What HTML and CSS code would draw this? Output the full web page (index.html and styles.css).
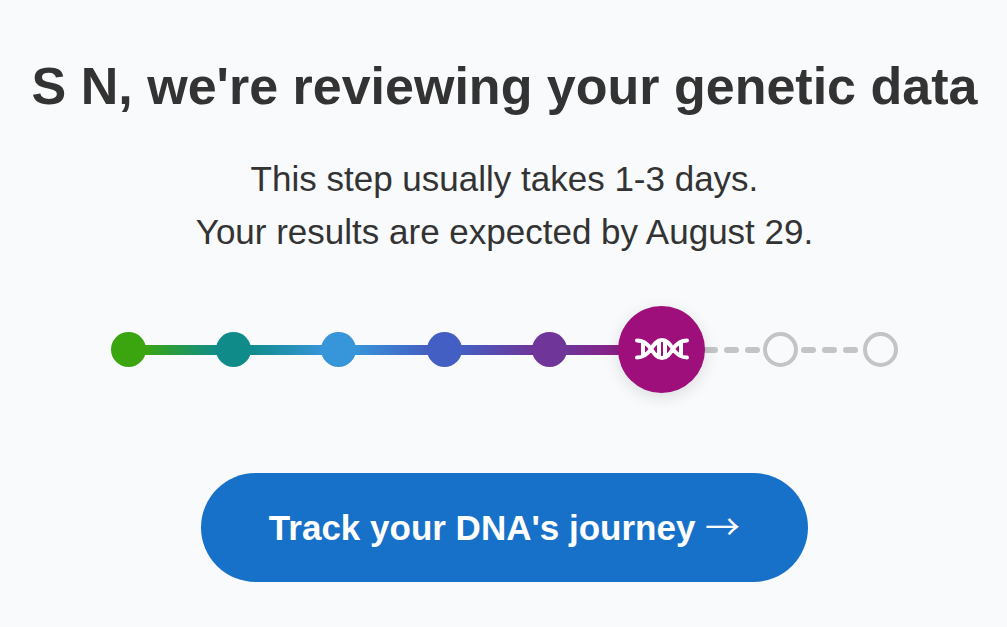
FILE: index.html
```
<!DOCTYPE html>
<html lang="en">
<head>
    <meta charset="utf-8">
    <title>Your DNA's journey</title>
    <link rel="stylesheet" href="styles.css">
</head>
<body>
    <main class="status">
        <h1>S N, we're reviewing your genetic data</h1>
        <p>This step usually takes 1-3 days.<br>Your results are expected by August 29.</p>

        <div class="tracker">
            <span class="step green"></span>
            <span class="line green-teal"></span>
            <span class="step teal"></span>
            <span class="line teal-blue"></span>
            <span class="step blue"></span>
            <span class="line blue-indigo"></span>
            <span class="step indigo"></span>
            <span class="line indigo-purple"></span>
            <span class="step purple"></span>
            <span class="line short purple-magenta"></span>
            <span class="step current">
                <svg width="56" height="26" viewBox="0 0 56 26" fill="none" stroke="#fff" stroke-linecap="round">
                    <path stroke-width="4" d="M3 3.500C10 3.500 14 7.500 17 12S23 21 28 21S36 16.500 39 12S46 3.500 53 3.500M3 20.500C10 20.500 14 16.500 17 12S23 3 28 3S36 7.500 39 12S46 20.500 53 20.500"/>
                    <path stroke-width="4" d="M9 6V18M25 5V19M31 5V19M47 6V18"/>
                </svg>
            </span>
            <svg class="dashes first" height="6"><line x1="1" y1="3" x2="54" y2="3"/></svg>
            <span class="step todo"></span>
            <svg class="dashes" height="6"><line x1="6" y1="3" x2="58" y2="3"/></svg>
            <span class="step todo"></span>
        </div>

        <a class="button" href="#journey">Track your DNA's journey <span class="arrow">→</span></a>
    </main>
</body>
</html>
```
FILE: styles.css
```
body {
    margin: 0;
    background-color: #f8fafc;
    color: #333;
    font-family: "Liberation Sans", Arial, sans-serif;
}

.status {
    display: flex;
    flex-direction: column;
    align-items: center;
    padding: 56px 14px 44px 16px;
    text-align: center;
}

h1 {
    margin: 0;
    font-size: 52px;
    line-height: 60px;
}

p {
    margin: 36px 0 48px;
    font-size: 35px;
    line-height: 53px;
}

.tracker {
    display: flex;
    align-items: center;
    width: 100%;
    max-width: 787px;
}

.step {
    flex: none;
    box-sizing: border-box;
    width: 35px;
    height: 35px;
    border-radius: 50%;
}

.green { background-color: #3ba510; }
.teal { background-color: #0f8c8a; }
.blue { background-color: #3795d9; }
.indigo { background-color: #445fc3; }
.purple { background-color: #6f3598; }

.current {
    display: flex;
    align-items: center;
    justify-content: center;
    z-index: 1;
    width: 87px;
    height: 87px;
    background-color: #9e0f7b;
    box-shadow: 0 4px 16px rgba(0, 0, 0, 0.12);
}

.todo {
    border: 4px solid #c3c4c6;
}

.line {
    flex: 73 1 0;
    height: 10px;
    margin: 0 -1px;
}

.short {
    flex-grow: 54;
}

.green-teal { background: linear-gradient(to right, #3ba510, #0f8c8a); }
.teal-blue { background: linear-gradient(to right, #0f8c8a, #3795d9); }
.blue-indigo { background: linear-gradient(to right, #3795d9, #445fc3); }
.indigo-purple { background: linear-gradient(to right, #445fc3, #6f3598); }
.purple-magenta { background: linear-gradient(to right, #6f3598, #8a1f86); }

.dashes {
    flex: 66 1 0;
    min-width: 0;
    overflow: visible;
    stroke: #c3c4c6;
    stroke-width: 6;
    stroke-linecap: round;
    stroke-dasharray: 9 12;
}

.first {
    flex-grow: 58;
}

.button {
    margin-top: 80px;
    padding: 27px 68px;
    border-radius: 55px;
    background-color: #1871c9;
    color: #fff;
    font-size: 35px;
    font-weight: bold;
    line-height: 55px;
    text-decoration: none;
}

.arrow {
    font-family: "Noto Sans CJK JP", sans-serif;
    font-weight: normal;
    line-height: 1;
}
```
